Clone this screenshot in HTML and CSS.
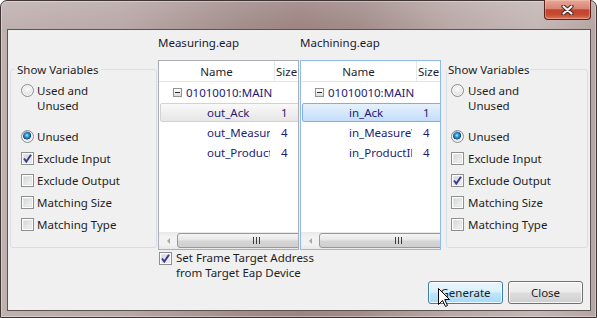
FILE: index.html
```html
<!DOCTYPE html>
<html>
	<head>
		<title>Generate Frame Mapping</title>
		<link rel="stylesheet" href="styles.css">
	</head>
	<body>
		<div class="window">
			<div class="titlebar">
				<button class="btn-x" type="button" title="Close">
					<svg width="13" height="10" viewBox="0 0 13 10"><path d="M2.5 1.5 L10.5 8.5 M10.5 1.5 L2.5 8.5" stroke="#4b2a26" stroke-width="4.2" stroke-linecap="round"/><path d="M2.5 1.5 L10.5 8.5 M10.5 1.5 L2.5 8.5" stroke="#f4f0ef" stroke-width="2.2" stroke-linecap="round"/></svg>
				</button>
			</div>
			<div class="client">
				<div class="main">
					<fieldset class="group left">
						<legend>Show Variables</legend>
						<div class="opt two"><span class="box radio"></span><span>Used and<br>Unused</span></div>
						<div class="opt"><span class="box radio on"></span>Unused</div>
						<div class="opt"><span class="box check"><svg width="11" height="11" viewBox="0 0 11 11"><path d="M2 5.5 L4.3 8.5 L9 1.8" fill="none" stroke="#3a3d8c" stroke-width="2"/></svg></span>Exclude Input</div>
						<div class="opt"><span class="box check"></span>Exclude Output</div>
						<div class="opt"><span class="box check"></span>Matching Size</div>
						<div class="opt"><span class="box check"></span>Matching Type</div>
					</fieldset>
					<div class="center">
						<div class="file">Measuring.eap</div>
						<div class="file">Machining.eap</div>
						<div class="tree">
							<div class="thead"><span class="col-name">Name</span><span class="col-size">Size</span></div>
							<div class="tbody">
								<div class="row"><span class="name root"><span class="toggle"></span>01010010:MAIN</span></div>
								<div class="row sel"><span class="name">out_Ack</span><span class="size">1</span></div>
								<div class="row"><span class="name">out_MeasureValue</span><span class="size">4</span></div>
								<div class="row"><span class="name">out_ProductID</span><span class="size">4</span></div>
							</div>
							<div class="hscroll"><span class="arrow"></span><span class="thumb"><span class="grip"></span></span></div>
						</div>
						<div class="tree focus">
							<div class="thead"><span class="col-name">Name</span><span class="col-size">Size</span></div>
							<div class="tbody">
								<div class="row"><span class="name root"><span class="toggle"></span>01010010:MAIN</span></div>
								<div class="row sel"><span class="name">in_Ack</span><span class="size">1</span></div>
								<div class="row"><span class="name">in_MeasureValue</span><span class="size">4</span></div>
								<div class="row"><span class="name">in_ProductID</span><span class="size">4</span></div>
							</div>
							<div class="hscroll"><span class="arrow"></span><span class="thumb"><span class="grip"></span></span></div>
						</div>
						<div class="opt frame"><span class="box check"><svg width="11" height="11" viewBox="0 0 11 11"><path d="M2 5.5 L4.3 8.5 L9 1.8" fill="none" stroke="#3a3d8c" stroke-width="2"/></svg></span><span>Set Frame Target Address<br>from Target Eap Device</span></div>
					</div>
					<fieldset class="group right">
						<legend>Show Variables</legend>
						<div class="opt two"><span class="box radio"></span><span>Used and<br>Unused</span></div>
						<div class="opt"><span class="box radio on"></span>Unused</div>
						<div class="opt"><span class="box check"></span>Exclude Input</div>
						<div class="opt"><span class="box check"><svg width="11" height="11" viewBox="0 0 11 11"><path d="M2 5.5 L4.3 8.5 L9 1.8" fill="none" stroke="#3a3d8c" stroke-width="2"/></svg></span>Exclude Output</div>
						<div class="opt"><span class="box check"></span>Matching Size</div>
						<div class="opt"><span class="box check"></span>Matching Type</div>
					</fieldset>
				</div>
				<div class="buttons">
					<button class="btn hot" type="button">Generate</button>
					<button class="btn" type="button">Close</button>
				</div>
				<svg class="cursor" width="13" height="20" viewBox="0 0 13 20"><path d="M0.5 0.5 L0.5 16.5 L4.5 12.5 L7.5 18.5 L9.5 17.5 L6.7 11.5 L11.5 11.5 Z" fill="#fff" stroke="#000" stroke-width="1" stroke-linejoin="miter"/></svg>
			</div>
		</div>
	</body>
</html>
```

FILE: styles.css
```css
*{
	box-sizing: border-box;
}
body{
	margin: 0;
	background: #fff;
	font-family: "Noto Sans", "Open Sans", sans-serif;
	font-size: 11.5px;
	color: #1e1e1e;
}
.window{
	width: 597px;
	height: 318px;
	display: flex;
	flex-direction: column;
	padding: 0 5px 6px 6px;
	border: 1px solid #3f3535;
	border-radius: 7px 7px 0 0;
	background:
		linear-gradient(to bottom, rgba(255,255,255,.12), rgba(255,255,255,0) 28px),
		linear-gradient(to right, #bfb1b0 0%, #b9a9a8 20%, #a38d8b 40%, #9c8482 50%, #a28c8a 60%, #b8a8a6 75%, #c4b7b5 90%, #b5a5a3 100%);
	box-shadow: inset 0 0 0 1px rgba(255,255,255,.35);
}
.titlebar{
	flex: none;
	height: 28px;
	display: flex;
	justify-content: flex-end;
	align-items: flex-start;
}
.btn-x{
	width: 47px;
	height: 20px;
	margin-top: -1px;
	padding: 0;
	border: 1px solid #5a241c;
	border-top: none;
	border-radius: 0 0 4px 4px;
	background: linear-gradient(#e6a896, #d98574 45%, #c0442e 52%, #c64b33 78%, #dc7a5f);
	box-shadow: inset 0 0 0 1px rgba(255,220,210,.35);
	display: flex;
	align-items: center;
	justify-content: center;
}
.client{
	flex: 1;
	position: relative;
	display: flex;
	flex-direction: column;
	background: #f0f0f0;
	border: 1px solid #5d5252;
}
.main{
	display: flex;
	align-items: flex-start;
	padding-left: 2px;
}
.group{
	margin: 32px 0 0;
	padding: 6px 0 0;
	height: 186px;
	min-width: 0;
	border: 1px solid #d5dfe5;
	border-radius: 3px;
}
.group legend{
	padding: 0 2px;
	margin-left: 4px;
	line-height: 15px;
}
.group.left{
	width: 147px;
}
.group.right{
	width: 142px;
	margin-left: 5px;
}
.group.right legend{
	padding: 0 1px;
	margin-left: 0;
}
.opt{
	display: flex;
	align-items: center;
	height: 22px;
	line-height: 15px;
	padding-left: 10px;
	white-space: nowrap;
}
.group.right .opt{
	padding-left: 4px;
}
.opt.two{
	height: 30px;
	align-items: flex-start;
	margin-bottom: 12px;
}
.opt.two .box{
	margin-top: 1px;
}
.box{
	flex: none;
	width: 13px;
	height: 13px;
	margin-right: 3px;
}
.group.right .box{
	margin-right: 4px;
}
.radio{
	border-radius: 50%;
	border: 1px solid #8d8d8d;
	background: radial-gradient(circle at 50% 40%, #fbfbfb, #d6d6d6);
	box-shadow: inset 0 0 0 1px rgba(255,255,255,.7);
}
.radio.on{
	background:
		radial-gradient(circle at 45% 40%, #b8ecff 0, #39a6df 1.6px, #186aa8 3.2px, #0f3f66 3.9px, rgba(0,0,0,0) 4.3px),
		radial-gradient(circle at 50% 40%, #fbfbfb, #d6d6d6);
}
.check{
	border: 1px solid #8e8f8f;
	background: linear-gradient(135deg, #cdd0d4, #f8f8f8);
	box-shadow: inset 0 0 0 1px #fff, inset 0 0 0 2px #e4e6e8;
	display: flex;
	align-items: center;
	justify-content: center;
}
.check svg{
	display: block;
}
.center{
	margin: 5px 0 0 1px;
	display: grid;
	grid-template-columns: 141px 141px;
	column-gap: 1px;
}
.file{
	height: 25px;
	line-height: 15px;
	color: #1a1a30;
}
.tree{
	height: 190px;
	border: 1px solid #abadb3;
	background: #fff;
	display: flex;
	flex-direction: column;
	overflow: hidden;
	color: #1c1c78;
}
.tree.focus{
	border-color: #8ebbea;
}
.thead{
	flex: none;
	height: 21px;
	display: flex;
	align-items: center;
	border-bottom: 1px solid #e5e5e5;
	color: #1e1e2e;
	white-space: nowrap;
}
.col-name{
	flex: none;
	width: 116px;
	height: 100%;
	display: flex;
	align-items: center;
	justify-content: center;
	border-right: 1px solid #e3e8ee;
}
.col-size{
	padding-left: 1px;
}
.tbody{
	flex: 1;
	overflow: hidden;
}
.row{
	display: flex;
	align-items: center;
	height: 20px;
	white-space: nowrap;
}
.name{
	flex: none;
	width: 111px;
	overflow: hidden;
	padding-left: 48px;
}
.name.root{
	display: flex;
	align-items: center;
	width: 130px;
	padding-left: 14px;
}
.toggle{
	flex: none;
	width: 9px;
	height: 9px;
	margin-right: 4px;
	border: 1px solid #919191;
	background: linear-gradient(#fff, #dcdcdc);
	display: flex;
	align-items: center;
	justify-content: center;
}
.toggle::before{
	content: '';
	width: 5px;
	height: 1px;
	background: #2b2b2b;
}
.size{
	padding-left: 11px;
}
.row.sel{
	height: 19px;
	margin: 1px -12px 0 1px;
	border: 1px solid #d2d2d2;
	border-radius: 2px;
	background: linear-gradient(#f9f9f9, #e6e6e6);
}
.tree.focus .row.sel{
	border-color: #84acdd;
	background: linear-gradient(#e6f1fc, #c4defb);
}
.row.sel .name{
	width: 109px;
	padding-left: 46px;
}
.hscroll{
	flex: none;
	height: 17px;
	display: flex;
	background: linear-gradient(#e8e8e8, #f2f2f2 25%, #f2f2f2 75%, #e8e8e8);
}
.arrow{
	flex: none;
	width: 18px;
	display: flex;
	align-items: center;
	justify-content: center;
}
.arrow::before{
	content: '';
	border-top: 3px solid transparent;
	border-bottom: 3px solid transparent;
	border-right: 3px solid #a8a8a8;
}
.thumb{
	flex: none;
	width: 158px;
	margin: 1px 0;
	border: 1px solid #989898;
	border-radius: 3px;
	background: linear-gradient(#f5f5f5, #e6e6e6 48%, #d6d6d6 52%, #cfcfcf);
	display: flex;
	align-items: center;
	justify-content: center;
}
.grip{
	width: 7px;
	height: 7px;
	background: repeating-linear-gradient(to right, #3c3c3c 0 1px, transparent 1px 3px);
}
.opt.frame{
	grid-column: 1 / 3;
	height: auto;
	align-items: flex-start;
	padding-left: 1px;
}
.opt.frame .box{
	margin: 2px 4px 0 0;
}
.buttons{
	margin-top: auto;
	display: flex;
	justify-content: flex-end;
	gap: 5px;
	padding: 0 7px 6px 0;
}
.btn{
	width: 75px;
	height: 23px;
	padding: 0;
	font: inherit;
	color: #1e1e1e;
	border: 1px solid #707070;
	border-radius: 3px;
	background: linear-gradient(#f2f2f2, #ebebeb 48%, #dddddd 52%, #cfcfcf);
	box-shadow: inset 0 0 0 1px rgba(255,255,255,.8);
}
.btn.hot{
	border-color: #3c7fb1;
	background: linear-gradient(#eaf6fd, #d9f0fc 48%, #bee6fd 52%, #a7d9f5);
}
.cursor{
	position: absolute;
	left: 430px;
	top: 258px;
}
```
